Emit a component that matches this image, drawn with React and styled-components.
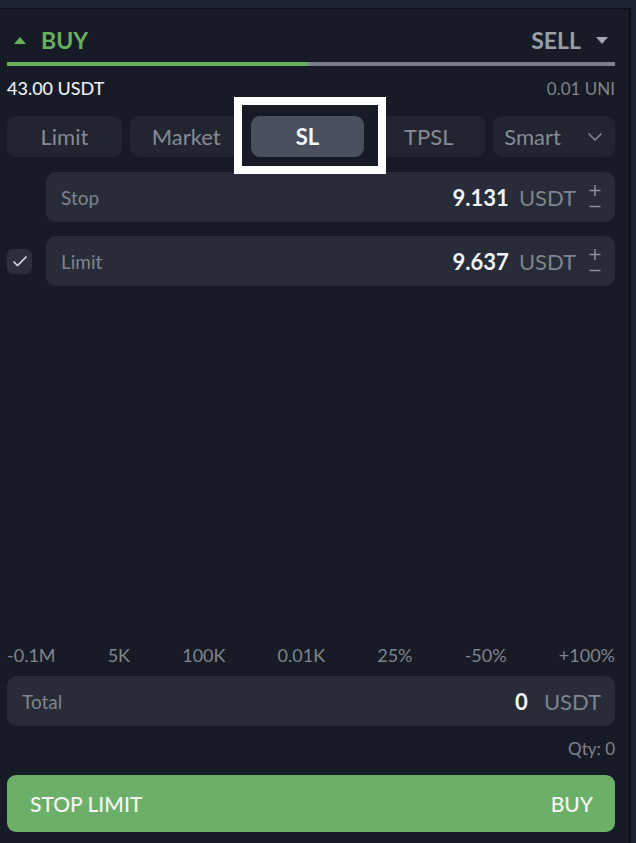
import React from 'react'
import styled, { createGlobalStyle } from 'styled-components'

const Global = createGlobalStyle`
  html, body {
    margin: 0;
    background: #1d2230;
  }
  * {
    box-sizing: border-box;
  }
`

const Panel = styled.div`
  margin-top: 8px;
  width: 631px;
  height: 835px;
  background: #171b25;
  border-top: 1px solid #0c0f15;
  border-right: 2px solid #0c0f15;
  padding: 19px 14px 0 7px;
  display: flex;
  flex-direction: column;
  font-family: Lato, 'Liberation Sans', sans-serif;
`

const SideRow = styled.div`
  display: flex;
  justify-content: space-between;
  align-items: center;
  height: 24px;
  padding: 0 7px;
`

const Side = styled.div`
  display: flex;
  align-items: center;
  gap: 15px;
  font-size: 23px;
  font-weight: 700;
  color: ${(p) => (p.$active ? '#69b05e' : '#9a9ea7')};
`

const Arrow = styled.span`
  width: 0;
  height: 0;
  border-left: 6px solid transparent;
  border-right: 6px solid transparent;
  ${(p) =>
    p.$up
      ? 'border-bottom: 7px solid #69b05e;'
      : 'border-top: 7px solid #a2a6ae;'}
`

const Bar = styled.div`
  display: flex;
  height: 4px;
  margin-top: 10px;
`

const BarPart = styled.div`
  height: 100%;
  flex: ${(p) => p.$grow};
  background: ${(p) => p.$color};
`

const InfoRow = styled.div`
  display: flex;
  justify-content: space-between;
  align-items: center;
  margin-top: 12px;
  height: 20px;
`

const Balance = styled.span`
  font-size: 18px;
  font-weight: 500;
  color: #eceef2;
`

const Muted = styled.span`
  font-size: 17px;
  color: #7f848e;
`

const Tabs = styled.div`
  display: grid;
  grid-template-columns: 115fr 113fr 114fr 113fr 122fr;
  gap: 8px;
  margin-top: 18px;
`

const Tab = styled.div`
  height: 41px;
  border-radius: 9px;
  background: ${(p) => (p.$active ? '#4b505e' : '#21252f')};
  color: ${(p) => (p.$active ? '#f4f5f7' : '#868b95')};
  font-size: 22px;
  font-weight: ${(p) => (p.$active ? 700 : 400)};
  display: flex;
  align-items: center;
  justify-content: center;
  min-width: 0;
`

const DropTab = styled(Tab)`
  justify-content: space-between;
  padding: 0 12px 0 11px;
`

const HighlightSlot = styled.div`
  position: relative;
  height: 41px;
`

const Highlight = styled.div`
  position: absolute;
  left: -17px;
  top: -19px;
  width: 152px;
  height: 77px;
  border: 8px solid #ffffff;
  background: #171b25;
`

const ActiveTab = styled(Tab)`
  position: absolute;
  inset: 0;
`

const Chevron = () => (
  <svg width="16" height="10" viewBox="0 0 16 10" fill="none">
    <path d="M1.5 1.5 L8 8 L14.5 1.5" stroke="#868b95" strokeWidth="1.5" />
  </svg>
)

const FieldRow = styled.div`
  display: flex;
  align-items: center;
  margin-top: ${(p) => p.$mt}px;
  padding-left: ${(p) => p.$pl || 0}px;
`

const Check = styled.div`
  width: 25px;
  height: 25px;
  border-radius: 6px;
  background: #2a2f3b;
  display: flex;
  align-items: center;
  justify-content: center;
  margin-right: 14px;
`

const Field = styled.div`
  flex: 1;
  height: 50px;
  border-radius: 10px;
  background: #272c38;
  display: flex;
  align-items: center;
  padding: 0 14px 0 15px;
`

const FieldLabel = styled.span`
  font-size: 19px;
  color: #7f848e;
  flex: 1;
`

const Value = styled.span`
  font-size: 22px;
  font-weight: 700;
  color: #f4f5f7;
`

const Unit = styled.span`
  font-size: 22px;
  color: #7f848e;
  margin-left: ${(p) => p.$gap || 10}px;
`

const Stepper = () => (
  <svg width="12" height="26" viewBox="0 0 12 26" style={{ marginLeft: 13 }}>
    <path d="M6 1 V12 M0.5 6.5 H11.5" stroke="#8a8f99" strokeWidth="1.5" />
    <path d="M0.5 22.5 H11.5" stroke="#8a8f99" strokeWidth="1.5" />
  </svg>
)

const Spacer = styled.div`
  flex: 1;
`

const Marks = styled.div`
  display: flex;
  justify-content: space-between;
  font-size: 18px;
  color: #7f848e;
  height: 22px;
  align-items: center;
`

const Qty = styled.div`
  text-align: right;
  font-size: 17px;
  color: #7f848e;
  margin-top: 12px;
  height: 20px;
`

const Submit = styled.div`
  margin-top: 17px;
  margin-bottom: 11px;
  height: 57px;
  border-radius: 9px;
  background: #6caf68;
  color: #f6f8f5;
  font-size: 21px;
  font-weight: 500;
  display: flex;
  justify-content: space-between;
  align-items: center;
  padding: 0 22px 0 23px;
`

export default function App() {
  const marks = ['-0.1M', '5K', '100K', '0.01K', '25%', '-50%', '+100%']

  return (
    <>
      <Global />
      <Panel>
        <SideRow>
          <Side $active>
            <Arrow $up />
            BUY
          </Side>
          <Side>
            SELL
            <Arrow />
          </Side>
        </SideRow>
        <Bar>
          <BarPart $grow={301} $color="#69b05e" />
          <BarPart $grow={307} $color="#7b7f88" />
        </Bar>
        <InfoRow>
          <Balance>43.00 USDT</Balance>
          <Muted>0.01 UNI</Muted>
        </InfoRow>
        <Tabs>
          <Tab>Limit</Tab>
          <Tab>Market</Tab>
          <HighlightSlot>
            <Highlight />
            <ActiveTab $active>SL</ActiveTab>
          </HighlightSlot>
          <Tab>TPSL</Tab>
          <DropTab>
            Smart
            <Chevron />
          </DropTab>
        </Tabs>
        <FieldRow $mt={15} $pl={39}>
          <Field>
            <FieldLabel>Stop</FieldLabel>
            <Value>9.131</Value>
            <Unit>USDT</Unit>
            <Stepper />
          </Field>
        </FieldRow>
        <FieldRow $mt={14}>
          <Check>
            <svg width="16" height="12" viewBox="0 0 16 12" fill="none">
              <path d="M1.5 6.5 L5.5 10.5 L14.5 1.5" stroke="#d5d8de" strokeWidth="1.6" />
            </svg>
          </Check>
          <Field>
            <FieldLabel>Limit</FieldLabel>
            <Value>9.637</Value>
            <Unit>USDT</Unit>
            <Stepper />
          </Field>
        </FieldRow>
        <Spacer />
        <Marks>
          {marks.map((m) => (
            <span key={m}>{m}</span>
          ))}
        </Marks>
        <FieldRow $mt={10}>
          <Field>
            <FieldLabel>Total</FieldLabel>
            <Value>0</Value>
            <Unit $gap={16}>USDT</Unit>
          </Field>
        </FieldRow>
        <Qty>Qty: 0</Qty>
        <Submit>
          <span>STOP LIMIT</span>
          <span>BUY</span>
        </Submit>
      </Panel>
    </>
  )
}
